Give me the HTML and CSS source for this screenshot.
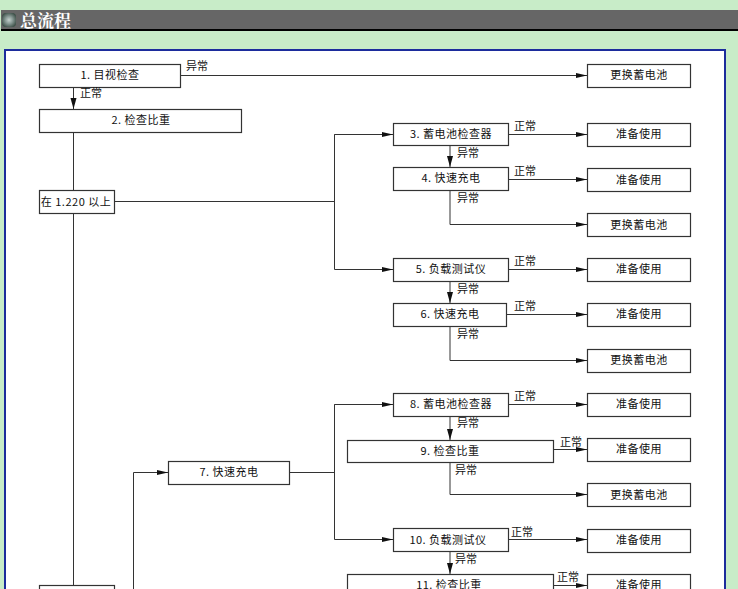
FILE: index.html
```html
<!DOCTYPE html>
<html lang="zh">
<head>
<meta charset="utf-8">
<title>总流程</title>
<link rel="stylesheet" href="styles.css">
</head>
<body>
<header class="title-bar">
  <span class="bullet"></span>
  <h1 class="title">总流程</h1>
</header>
<main class="panel">
<svg class="chart" width="718" height="538" viewBox="6 51 718 538">
  <defs>
    <marker id="arrow" markerUnits="userSpaceOnUse" markerWidth="12" markerHeight="8" refX="11" refY="4" orient="auto">
      <path d="M0 1.5 L11 4 L0 6.5 Z" fill="#111"/>
    </marker>
    <marker id="arrow-down" markerUnits="userSpaceOnUse" markerWidth="12" markerHeight="8" refX="11" refY="4" orient="auto">
      <path d="M0 1 L11 4 L0 7 Z" fill="#111"/>
    </marker>
  </defs>

  <g class="lines">
    <path d="M181 75.5H587" marker-end="url(#arrow)"/>
    <path d="M73.5 87V109" marker-end="url(#arrow-down)"/>
    <path d="M73.5 132V585"/>
    <path d="M114 201.5H334.5"/>
    <path d="M393 134.5H334.5V269.5H393" marker-end="url(#arrow)"/>
    <path d="M334.5 134.5H393" marker-end="url(#arrow)"/>
    <path d="M508 134.5H587" marker-end="url(#arrow)"/>
    <path d="M450 145V167" marker-end="url(#arrow-down)"/>
    <path d="M508 179.5H587" marker-end="url(#arrow)"/>
    <path d="M450 190V224.5H587" marker-end="url(#arrow)"/>
    <path d="M508 269.5H587" marker-end="url(#arrow)"/>
    <path d="M450 281V303" marker-end="url(#arrow-down)"/>
    <path d="M506 314.5H587" marker-end="url(#arrow)"/>
    <path d="M450 326V360.5H587" marker-end="url(#arrow)"/>
    <path d="M133.5 589V472.5H168" marker-end="url(#arrow)"/>
    <path d="M290 472.5H334.5"/>
    <path d="M393 404.5H334.5V539.5H393" marker-end="url(#arrow)"/>
    <path d="M334.5 404.5H393" marker-end="url(#arrow)"/>
    <path d="M508 404.5H587" marker-end="url(#arrow)"/>
    <path d="M450 416V440" marker-end="url(#arrow-down)"/>
    <path d="M553 449.5H587" marker-end="url(#arrow)"/>
    <path d="M450 462V494.5H587" marker-end="url(#arrow)"/>
    <path d="M508 539.5H587" marker-end="url(#arrow)"/>
    <path d="M450 551V574" marker-end="url(#arrow-down)"/>
    <path d="M553 585.5H587" marker-end="url(#arrow)"/>
  </g>

  <g class="boxes">
    <rect x="39.5" y="64.5" width="141" height="23"/>
    <rect x="39.5" y="109.5" width="202" height="23"/>
    <rect x="39.5" y="190.5" width="75" height="23"/>
    <rect x="39.5" y="585.5" width="75" height="23"/>
    <rect x="168.5" y="461.5" width="121" height="23"/>
    <rect x="393.5" y="123.5" width="115" height="22"/>
    <rect x="393.5" y="167.5" width="115" height="23"/>
    <rect x="393.5" y="258.5" width="115" height="23"/>
    <rect x="393.5" y="303.5" width="113" height="23"/>
    <rect x="393.5" y="393.5" width="115" height="23"/>
    <rect x="347.5" y="440.5" width="206" height="22"/>
    <rect x="393.5" y="528.5" width="115" height="23"/>
    <rect x="347.5" y="574.5" width="206" height="23"/>
    <rect x="587.5" y="64.5" width="103" height="23"/>
    <rect x="587.5" y="123.5" width="103" height="23"/>
    <rect x="587.5" y="168.5" width="103" height="23"/>
    <rect x="587.5" y="213.5" width="103" height="23"/>
    <rect x="587.5" y="258.5" width="103" height="23"/>
    <rect x="587.5" y="303.5" width="103" height="23"/>
    <rect x="587.5" y="349.5" width="103" height="23"/>
    <rect x="587.5" y="393.5" width="103" height="23"/>
    <rect x="587.5" y="438.5" width="103" height="23"/>
    <rect x="587.5" y="483.5" width="103" height="23"/>
    <rect x="587.5" y="529.5" width="103" height="23"/>
    <rect x="587.5" y="574.5" width="103" height="23"/>
  </g>

  <g class="node-text">
    <text x="110" y="79">1. 目视检查</text>
    <text x="141" y="124">2. 检查比重</text>
    <text x="76" y="206">在 1.220 以上</text>
    <text x="229" y="476">7. 快速充电</text>
    <text x="451" y="138">3. 蓄电池检查器</text>
    <text x="451" y="182">4. 快速充电</text>
    <text x="451" y="273">5. 负载测试仪</text>
    <text x="450" y="318">6. 快速充电</text>
    <text x="451" y="408">8. 蓄电池检查器</text>
    <text x="450" y="455">9. 检查比重</text>
    <text x="448" y="544">10. 负载测试仪</text>
    <text x="449" y="589">11. 检查比重</text>
    <text x="639" y="79">更换蓄电池</text>
    <text x="639" y="138">准备使用</text>
    <text x="639" y="184">准备使用</text>
    <text x="639" y="229">更换蓄电池</text>
    <text x="639" y="273">准备使用</text>
    <text x="639" y="318">准备使用</text>
    <text x="639" y="364">更换蓄电池</text>
    <text x="639" y="408">准备使用</text>
    <text x="639" y="453">准备使用</text>
    <text x="639" y="499">更换蓄电池</text>
    <text x="639" y="544">准备使用</text>
    <text x="639" y="589">准备使用</text>
  </g>

  <g class="edge-text">
    <text x="186" y="70">异常</text>
    <text x="80" y="97">正常</text>
    <text x="514" y="130">正常</text>
    <text x="457" y="157">异常</text>
    <text x="514" y="175">正常</text>
    <text x="457" y="202">异常</text>
    <text x="514" y="265">正常</text>
    <text x="457" y="293">异常</text>
    <text x="514" y="310">正常</text>
    <text x="457" y="338">异常</text>
    <text x="514" y="400">正常</text>
    <text x="457" y="427">异常</text>
    <text x="560" y="446">正常</text>
    <text x="455" y="474">异常</text>
    <text x="511" y="536">正常</text>
    <text x="455" y="563">异常</text>
    <text x="557" y="581">正常</text>
  </g>
</svg>
</main>
</body>
</html>
```

FILE: styles.css
```css
html, body {
  margin: 0;
  padding: 0;
  height: 589px;
  overflow: hidden;
  background: #c8ecc8;
}

.title-bar {
  display: flex;
  align-items: center;
  gap: 4px;
  height: 19px;
  margin: 10px 0 0 1px;
  padding-left: 1px;
  background: #666;
  border-bottom: 2px solid #000;
}

.bullet {
  width: 14px;
  height: 14px;
  border-radius: 4px;
  background: radial-gradient(circle at 50% 50%, #c4d0cc 0, #8b9c98 35%, #3d5048 80%, #2a3a34 100%);
}

.title {
  margin: 0;
  font: bold 17px/19px "Noto Serif CJK SC", "Noto Sans CJK SC", serif;
  color: #fff;
}

.panel {
  margin: 18px 0 0 4px;
  width: 718px;
  border: 2px solid #1c2c9c;
  border-bottom: 0;
  background: #fff;
}

.chart {
  display: block;
}

.lines path {
  fill: none;
  stroke: #333;
  stroke-width: 1;
}

.boxes rect {
  fill: #fff;
  stroke: #333;
  stroke-width: 1.2;
}

.node-text text,
.edge-text text {
  font-family: "Noto Sans CJK SC", "Liberation Sans", sans-serif;
  font-size: 11px;
  fill: #111;
}

.node-text text {
  text-anchor: middle;
  letter-spacing: 0.5px;
}
```
